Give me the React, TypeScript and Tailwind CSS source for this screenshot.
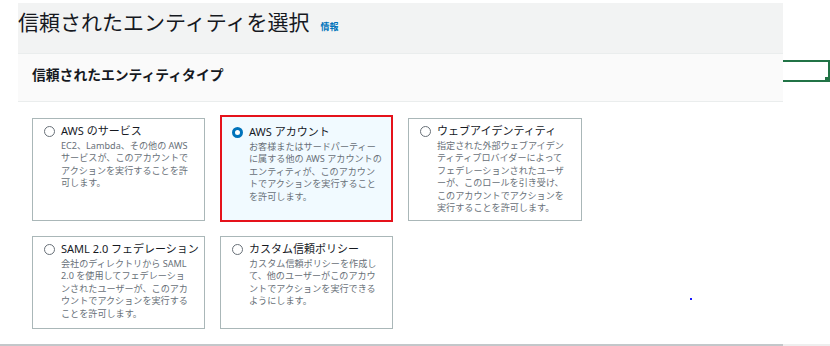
import React from "react";

type CardProps = {
  title: string;
  lines: string[];
  selected?: boolean;
  className?: string;
};

function Card({ title, lines, selected, className }: CardProps) {
  return (
    <div
      className={
        (selected
          ? "border-2 border-[#e5121b] bg-[#f1faff] pl-[10px] pt-[8px] "
          : "border border-[#aab7b8] bg-white pl-[11px] pt-[5px] ") + (className ?? "")
      }
    >
      <div className="flex items-start gap-[6px]">
        {selected ? (
          <div className="mt-[2px] h-[11px] w-[11px] shrink-0 rounded-full border-[3.5px] border-[#0073bb] bg-white" />
        ) : (
          <div className="mt-[2px] h-[11px] w-[11px] shrink-0 rounded-full border-[1.5px] border-[#687078] bg-white" />
        )}
        <div>
          <div className="text-[11px] leading-[14px] text-[#16191f] whitespace-nowrap">{title}</div>
          <div className="mt-[2px] text-[9.1px] leading-[12.4px] text-[#687078]">
            {lines.map((l, i) => (
              <div key={i} className="whitespace-nowrap">
                {l}
              </div>
            ))}
          </div>
        </div>
      </div>
    </div>
  );
}

export default function App() {
  return (
    <div
      className="relative h-[346px] w-[830px] overflow-hidden bg-white"
      style={{ fontFamily: '"Noto Sans", "Noto Sans CJK JP", sans-serif' }}
    >
      <div className="ml-[18px] mt-[3px] w-[765px]">
        <div className="h-[50px] bg-[#f2f3f3] pt-[7px]">
          <div className="flex items-baseline gap-[11px]">
            <span className="text-[21px] leading-[25px] text-[#16191f]">信頼されたエンティティを選択</span>
            <span className="text-[9px] font-bold leading-[10px] text-[#0073bb]">情報</span>
          </div>
        </div>
        <div className="flex h-[49px] items-center border-y border-[#eaeded] bg-[#fafafa] pb-[5px] pl-[14px]">
          <span className="text-[13.8px] font-bold leading-[18px] text-[#16191f]">信頼されたエンティティタイプ</span>
        </div>
        <div className="grid grid-cols-[173px_173px_174px] grid-rows-[103px_93px] gap-x-[15px] gap-y-[15px] pl-[14px] pt-[16px]">
          <Card
            title="AWS のサービス"
            lines={["EC2、Lambda、その他の AWS", "サービスが、このアカウントで", "アクションを実行することを許", "可します。"]}
          />
          <Card
            selected
            className="-mt-[3px] h-[107px] self-start"
            title="AWS アカウント"
            lines={[
              "お客様またはサードパーティー",
              "に属する他の AWS アカウントの",
              "エンティティが、このアカウン",
              "トでアクションを実行すること",
              "を許可します。",
            ]}
          />
          <Card
            title="ウェブアイデンティティ"
            lines={[
              "指定された外部ウェブアイデン",
              "ティティプロバイダーによって",
              "フェデレーションされたユーザ",
              "ーが、このロールを引き受け、",
              "このアカウントでアクションを",
              "実行することを許可します。",
            ]}
          />
          <Card
            title="SAML 2.0 フェデレーション"
            lines={[
              "会社のディレクトリから SAML",
              "2.0 を使用してフェデレーショ",
              "ンされたユーザーが、このアカ",
              "ウントでアクションを実行する",
              "ことを許可します。",
            ]}
          />
          <Card
            title="カスタム信頼ポリシー"
            lines={[
              "カスタム信頼ポリシーを作成し",
              "て、他のユーザーがこのアカウ",
              "ントでアクションを実行できる",
              "ようにします。",
            ]}
          />
        </div>
      </div>
      <div className="mt-[15px] flex h-[2px]">
        <div className="w-[783px] bg-[#c3c7ca]" />
        <div className="flex-1 bg-[#eeeeee]" />
      </div>

      {/* spreadsheet-like selection overlay */}
      <div className="absolute left-[783px] top-[60px] h-[22px] w-[47px] border-y-2 border-r-2 border-[#217346]" />
      <div className="absolute left-[825px] top-[77px] h-[5px] w-[5px] bg-[#217346]" />
      <div className="absolute left-[690px] top-[298px] h-[2px] w-[2px] bg-[#1a1aff]" />
    </div>
  );
}
